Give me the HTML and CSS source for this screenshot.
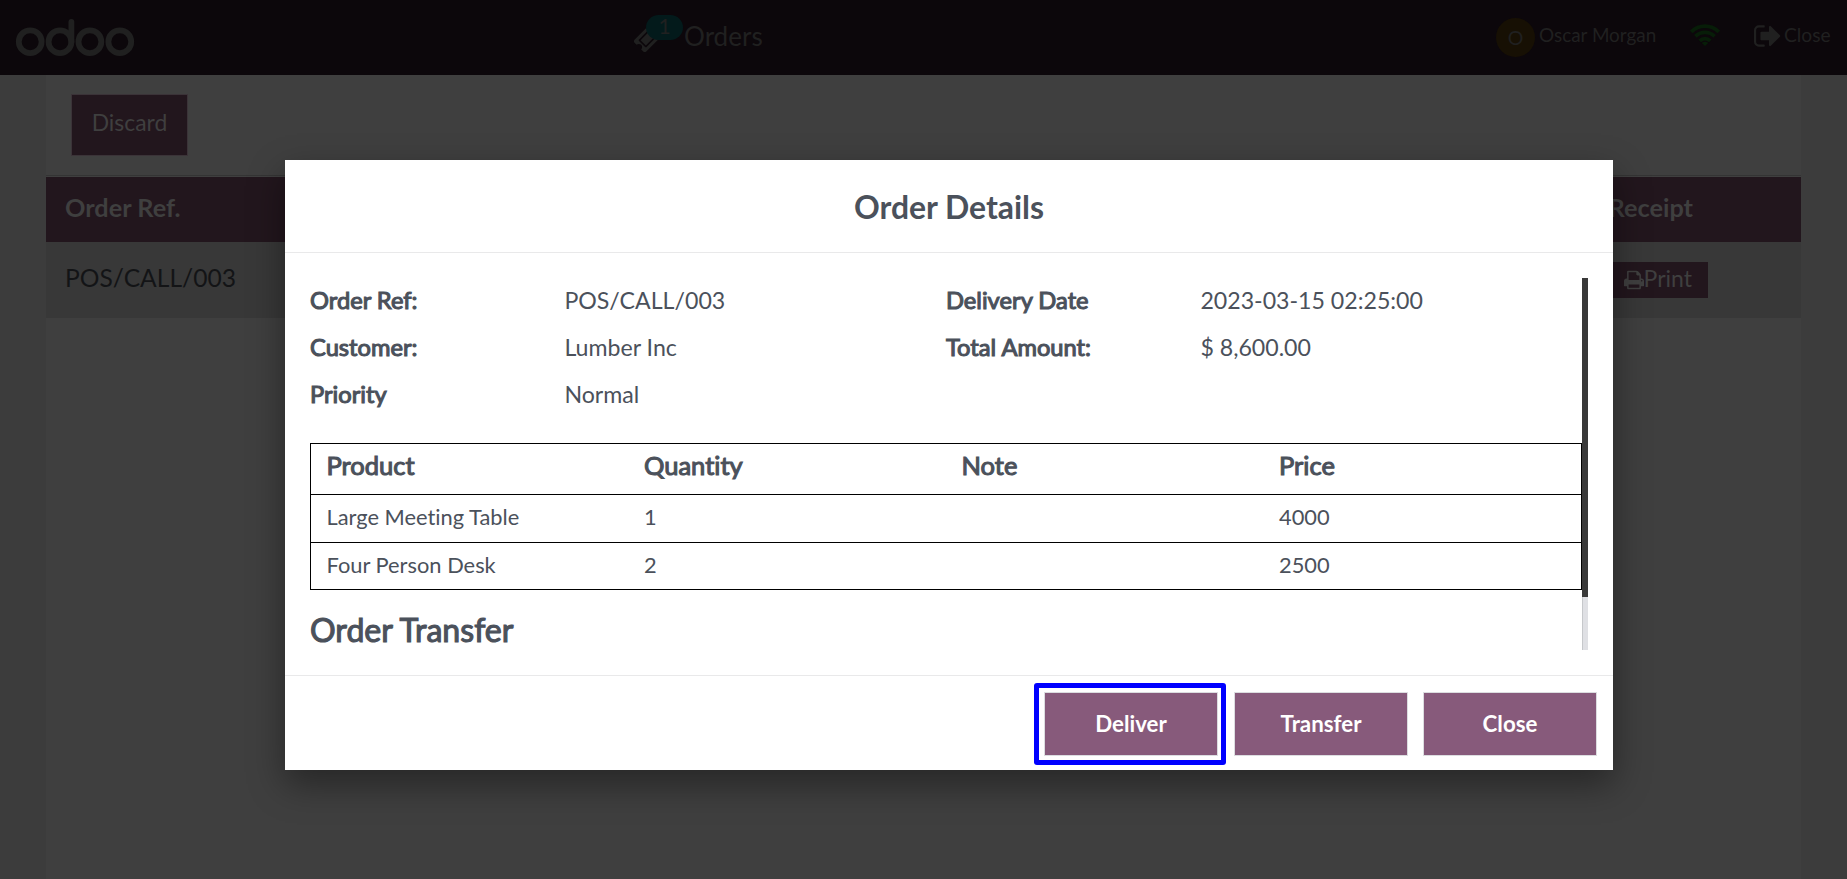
FILE: index.html
```
<!DOCTYPE html>
<html lang="en">
<head>
<meta charset="utf-8">
<title>Orders</title>
<link rel="stylesheet" href="styles.css">
</head>
<body>
<div class="app">
  <header class="topbar">
    <svg class="logo" viewBox="0 0 120 40" aria-label="odoo">
      <g fill="none" stroke="currentColor" stroke-width="5.8" stroke-linecap="round">
        <circle cx="15.2" cy="23.7" r="11.4"/>
        <circle cx="45" cy="23.7" r="11.4"/>
        <path d="M56.4 23.7V3.9"/>
        <circle cx="74.9" cy="23.7" r="11.4"/>
        <circle cx="104.8" cy="23.7" r="11.4"/>
      </g>
    </svg>
    <div class="orders-tab">
      <svg class="ticket" viewBox="0 0 1792 1792"><path fill="currentColor" d="M1024 452l316 316-572 572-316-316zm-211 979l618-618q19-19 19-45t-19-45l-362-362q-18-18-45-18t-45 18l-618 618q-19 19-19 45t19 45l362 362q18 18 45 18t45-18zm889-637l-907 908q-37 37-90.5 37t-90.5-37l-126-125q56-56 56-136t-56-136-136-56-136 56l-125-126q-37-37-37-90.5t37-90.5l907-906q37-37 90.5-37t90.5 37l125 125q-56 56-56 136t56 136 136 56 136-56l126 125q37 37 37 90.5t-37 90.5z"/></svg>
      <span class="badge">1</span>
      <span class="orders-label">Orders</span>
    </div>
    <div class="status">
      <span class="avatar">O</span>
      <span class="user">Oscar Morgan</span>
      <svg class="wifi" viewBox="0 0 30 22">
        <g fill="none" stroke="currentColor" stroke-width="3.8">
          <path d="M1.2 7.9A19.6 19.6 0 0 1 28.8 7.9"/>
          <path d="M5.4 12.4A13.6 13.6 0 0 1 24.6 12.4"/>
          <path d="M9.7 16.8A7.6 7.6 0 0 1 20.3 16.8"/>
        </g>
        <path fill="currentColor" d="M15 22L11.8 18.9Q15 16.7 18.2 18.9Z"/>
      </svg>
      <svg class="signout" viewBox="0 0 1792 1792"><path fill="currentColor" d="M640 1440q0 4 1 20t.5 26.5-3 23.5-10 19.5-20.5 6.5h-320q-119 0-203.5-84.5t-84.5-203.5v-704q0-119 84.5-203.5t203.5-84.5h320q13 0 22.5 9.5t9.5 22.5q0 4 1 20t.5 26.5-3 23.5-10 19.5-20.5 6.5h-320q-66 0-113 47t-47 113v704q0 66 47 113t113 47h312l11.5 1 11.5 3 8 5.5 7 9 2 13.5zm928-544q0 26-19 45l-544 544q-19 19-45 19t-45-19-19-45v-288h-448q-26 0-45-19t-19-45v-384q0-26 19-45t45-19h448v-288q0-26 19-45t45-19 45 19l544 544q19 19 19 45z"/></svg>
      <span class="exit">Close</span>
    </div>
  </header>
  <main class="screen">
    <div class="toolbar"><button class="discard">Discard</button></div>
    <div class="list-head"><span>Order Ref.</span><span class="receipt-head">Receipt</span></div>
    <div class="list-row">
      <span>POS/CALL/003</span>
      <button class="print"><svg viewBox="0 0 1664 1664"><path fill="currentColor" transform="translate(-64 -64)" d="M448 1536h896v-256h-896v256zm0-640h896v-384h-160q-40 0-68-28t-28-68v-160h-640v640zm1152 64q0-26-19-45t-45-19-45 19-19 45 19 45 45 19 45-19 19-45zm128 0v416q0 13-9.5 22.5t-22.5 9.5h-224v160q0 40-28 68t-68 28h-960q-40 0-68-28t-28-68v-160h-224q-13 0-22.5-9.5t-9.5-22.5v-416q0-79 56.5-135.5t135.5-56.5h64v-544q0-40 28-68t68-28h672q40 0 88 20t76 48l152 152q28 28 48 76t20 88v256h64q79 0 135.5 56.5t56.5 135.5z"/></svg>Print</button>
    </div>
  </main>
</div>

<section class="modal">
  <h1 class="modal-title">Order Details</h1>
  <div class="modal-body">
    <div class="content">
      <div class="info">
        <b>Order Ref:</b><span>POS/CALL/003</span><b>Delivery Date</b><span>2023-03-15 02:25:00</span>
        <b>Customer:</b><span>Lumber Inc</span><b>Total Amount:</b><span>$ 8,600.00</span>
        <b>Priority</b><span>Normal</span>
      </div>
      <div class="lines">
        <div class="line line-head"><span>Product</span><span>Quantity</span><span>Note</span><span>Price</span></div>
        <div class="line"><span>Large Meeting Table</span><span>1</span><span></span><span>4000</span></div>
        <div class="line"><span>Four Person Desk</span><span>2</span><span></span><span>2500</span></div>
      </div>
      <h2 class="transfer-title">Order Transfer</h2>
    </div>
    <div class="scrollbar"><div class="thumb"></div></div>
  </div>
  <footer class="modal-foot">
    <button class="action highlighted">Deliver</button>
    <button class="action">Transfer</button>
    <button class="action">Close</button>
  </footer>
</section>
</body>
</html>
```

FILE: styles.css
```
* { box-sizing: border-box; }
body {
  margin: 0;
  width: 1847px;
  height: 879px;
  overflow: hidden;
  font-family: Lato, sans-serif;
  font-variant-ligatures: none;
  background: #3c3c3c;
}
button { font-family: inherit; margin: 0; border: 0; }

.app { height: 879px; display: flex; flex-direction: column; }

/* Top bar */
.topbar {
  height: 75px;
  flex: none;
  display: flex;
  align-items: flex-start;
  padding-left: 15px;
  background: #0c070b;
  color: #202020;
}
.logo { width: 120px; height: 40px; margin-top: 18px; flex: none; }
.orders-tab { position: relative; display: flex; margin-left: 498px; width: 140px; }
.ticket { width: 30px; height: 30px; margin-top: 23px; flex: none; }
.badge {
  position: absolute;
  left: 13px;
  top: 15px;
  width: 37px;
  height: 25px;
  border-radius: 13px;
  background: #031a1b;
  font-size: 21px;
  line-height: 21px;
  text-align: center;
}
.orders-label { margin-left: 21px; margin-top: 21px; font-size: 26.1px; line-height: 30px; }
.status { display: flex; align-items: flex-start; margin-left: 723px; white-space: nowrap; }
.avatar {
  width: 39px;
  height: 39px;
  margin-top: 18px;
  border-radius: 50%;
  background: #171004;
  font-size: 19.5px;
  line-height: 39px;
  text-align: center;
}
.user { margin-left: 4px; margin-top: 20px; width: 118px; font-size: 18.9px; line-height: 30px; }
.wifi { width: 30px; height: 22px; margin-left: 33px; margin-top: 24px; color: #071d08; }
.signout { width: 30px; height: 30px; margin-left: 34px; margin-top: 21px; color: #202020; }
.exit { margin-top: 20px; font-size: 19.2px; line-height: 30px; }

/* Order list behind the dialog */
.screen { flex: 1; margin: 0 46px; background: #3f3f3f; }
.toolbar { height: 102px; padding: 19px 0 0 25px; border-bottom: 1px solid #3f3f3f; box-shadow: inset 0 -1px #343434; }
.discard {
  width: 117px;
  height: 62px;
  padding: 0 0 6px;
  border: 1px solid #3b3338;
  background: #22161d;
  color: #3f3f3f;
  font-size: 22.9px;
}
.list-head {
  display: flex;
  justify-content: space-between;
  height: 65px;
  padding: 0 108px 0 19px;
  background: #22161d;
  color: #3f3f3f;
  font-size: 25.3px;
  font-weight: 700;
  line-height: 61px;
}
.list-row {
  display: flex;
  justify-content: space-between;
  align-items: flex-start;
  height: 76px;
  padding: 0 93px 0 19px;
  background: #383838;
  color: #131416;
  font-size: 24.6px;
  line-height: 71px;
}
.print {
  display: flex;
  align-items: center;
  justify-content: flex-end;
  width: 120px;
  height: 36px;
  margin-top: 20px;
  padding: 0 16px 3px 0;
  background: #22161d;
  color: #3f3f3f;
  font-size: 23px;
  line-height: 33px;
}
.print svg { width: 20px; height: 20px; margin-top: 2px; }

/* Dialog */
.modal {
  position: absolute;
  left: 285px;
  top: 160px;
  width: 1328px;
  height: 610px;
  display: flex;
  flex-direction: column;
  background: #fff;
  color: #4b515b;
  box-shadow: 0 14px 34px rgba(0, 0, 0, .4);
}
.modal-title {
  margin: 0;
  height: 93px;
  border-bottom: 1px solid #e9e9ea;
  font-size: 31.9px;
  font-weight: 700;
  line-height: 94px;
  text-align: center;
}
.modal-body { display: flex; height: 422px; padding: 25px 25px 25px; }
.content { width: 1272px; }
.info {
  display: grid;
  grid-template-columns: 254.4px 381.6px 254.4px 381.6px;
  grid-auto-rows: 47px;
  height: 165px;
  font-size: 23.15px;
  line-height: 44px;
}
.info b, .line-head, .transfer-title { font-weight: 400; -webkit-text-stroke: 1.1px currentColor; }
.info b { font-size: 23.7px; }
.lines { border: 1px solid #000; }
.line {
  display: grid;
  grid-template-columns: repeat(4, 1fr);
  height: 48px;
  border-top: 1px solid #000;
  font-size: 21.85px;
  line-height: 44px;
}
.line:last-child { height: 47px; }
.line span { padding-left: 15.5px; }
.line-head { height: 50px; border-top: 0; font-size: 25.5px; line-height: 43px; }
.transfer-title { margin: 21px 0 0; font-size: 32.1px; line-height: 38px; }
.scrollbar { width: 6px; height: 372px; background: #dfe0e4; box-shadow: inset 1px 0 #c6c8cb; }
.thumb { height: 319px; background: #393939; }
.modal-foot {
  display: flex;
  justify-content: flex-end;
  gap: 15px;
  height: 95px;
  padding: 16px 16px 0 0;
  border-top: 1px solid #e9e9ea;
}
.action {
  position: relative;
  width: 174px;
  height: 64px;
  padding: 0 0 2px;
  border: 1px solid #dcdde0;
  background: #875a7b;
  color: #fff;
  font-size: 22.3px;
  font-weight: 700;
}
/* Focus frame around the recommended action */
.highlighted { margin-right: 1px; }
.highlighted::after {
  content: "";
  position: absolute;
  inset: -10px -9px -10px -11px;
  border: 5px solid #00f;
  border-radius: 3px;
}
```
